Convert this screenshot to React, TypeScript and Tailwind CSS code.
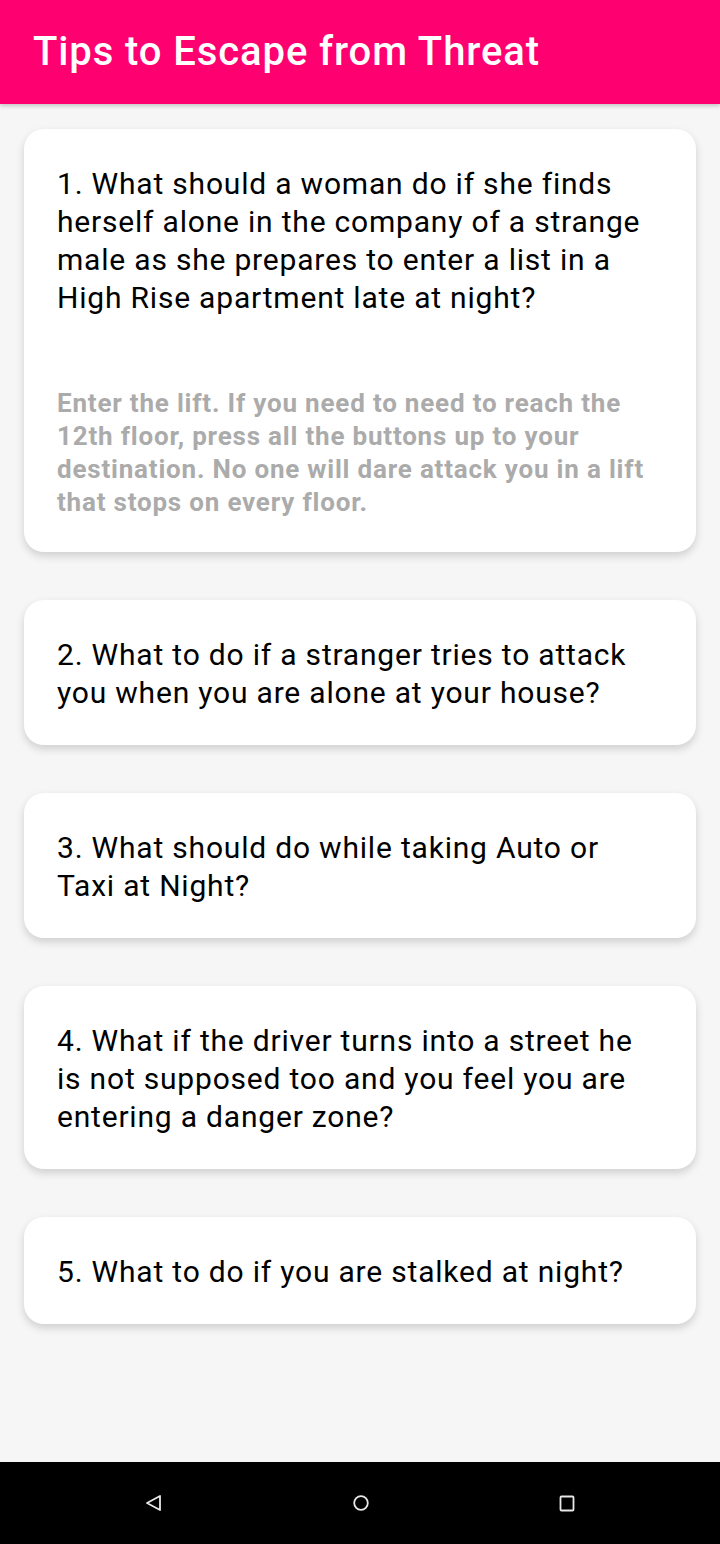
import React from "react";

const tips = [
  {
    q: "1. What should a woman do if she finds herself alone in the company of a strange male as she prepares to enter a list in a High Rise apartment late at night?",
    a: "Enter the lift. If you need to need to reach the 12th floor, press all the buttons up to your destination. No one will dare attack you in a lift that stops on every floor.",
  },
  { q: "2. What to do if a stranger tries to attack you when you are alone at your house?" },
  { q: "3. What should do while taking Auto or Taxi at Night?" },
  { q: "4. What if the driver turns into a street he is not supposed too and you feel you are entering a danger zone?" },
  { q: "5. What to do if you are stalked at night?" },
];

const TipCard = ({ q, a }: { q: string; a?: string }) => (
  <div className="bg-white rounded-[20px] shadow-[0_4px_8px_rgba(0,0,0,0.16)] pl-[33px] pr-[44px] pt-[36px] pb-[33px]">
    <p className="text-[30px] leading-[38px] tracking-[0.8px] text-black">{q}</p>
    {a && (
      <p className="mt-[70px] text-[26px] leading-[33px] tracking-[0.8px] font-bold text-[#ababab]">{a}</p>
    )}
  </div>
);

export default function App() {
  return (
    <div
      className="w-[720px] h-[1544px] flex flex-col bg-[#f6f6f6] overflow-hidden"
      style={{ fontFamily: "Roboto, 'Liberation Sans', sans-serif" }}
    >
      <header className="h-[104px] shrink-0 bg-[#ff0070] flex items-center px-[33px] shadow-[0_2px_4px_rgba(0,0,0,0.2)] z-10">
        <h1 className="text-[40px] font-medium tracking-[0.9px] text-white">Tips to Escape from Threat</h1>
      </header>

      <main className="flex-1 flex flex-col gap-[48px] px-[24px] pt-[25px]">
        {tips.map((t, i) => (
          <TipCard key={i} q={t.q} a={t.a} />
        ))}
      </main>

      {/* android nav bar */}
      <nav className="h-[82px] shrink-0 bg-black flex items-center justify-between pl-[145px] pr-[144px]">
        <svg width="17" height="18" viewBox="0 0 17 18" fill="none">
          <path d="M15 2 L2 9 L15 16 Z" stroke="#e8e8e8" strokeWidth="1.8" strokeLinejoin="round" />
        </svg>
        <svg width="16" height="16" viewBox="0 0 16 16" fill="none">
          <circle cx="8" cy="8" r="6.8" stroke="#e8e8e8" strokeWidth="1.8" />
        </svg>
        <svg width="17" height="17" viewBox="0 0 17 17" fill="none">
          <rect x="1.5" y="1.5" width="13" height="14" rx="1" stroke="#e8e8e8" strokeWidth="1.8" />
        </svg>
      </nav>
    </div>
  );
}
